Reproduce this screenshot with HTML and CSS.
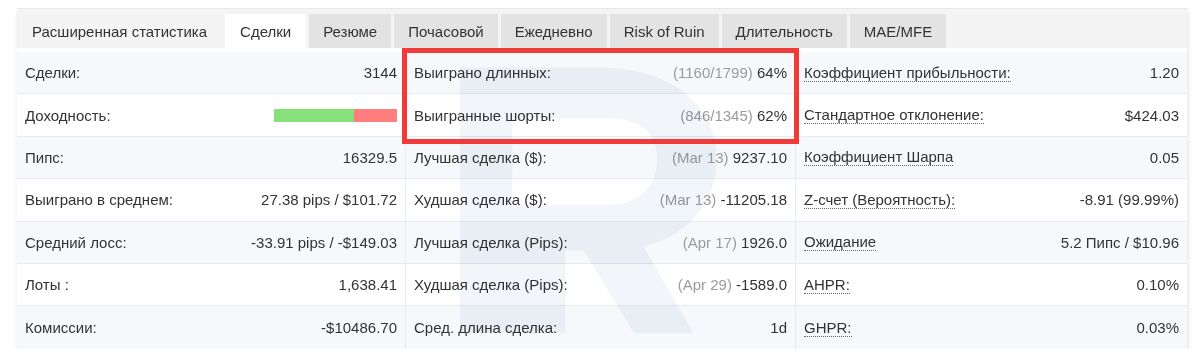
FILE: index.html
```html
<!DOCTYPE html>
<html lang="ru">
<head>
    <meta charset="UTF-8">
    <title>Статистика</title>
    <link rel="stylesheet" href="styles.css">
</head>
<body>
	<div class="panel">
		<ul class="tabs">
			<li class="plain">Расширенная статистика</li>
			<li class="on">Сделки</li>
			<li>Резюме</li>
			<li>Почасовой</li>
			<li>Ежедневно</li>
			<li>Risk of Ruin</li>
			<li>Длительность</li>
			<li>MAE/MFE</li>
		</ul>
		<div class="stats">
			<svg class="mark" viewBox="0 0 300 300" aria-hidden="true">
				<path d="M0 0 H150 C230 0 280 40 280 100 C280 150 245 185 200 195 L255 290 H190 L135 200 H115 V290 H57 V150 H160 C195 150 215 130 215 100 C215 70 195 55 160 55 H57 V290 H0 Z"/>
			</svg>
			<div class="col">
				<div class="row"><span>Сделки:</span><span>3144</span></div>
				<div class="row"><span>Доходность:</span><span class="bar"><i class="win" style="width:65%"></i><i class="loss"></i></span></div>
				<div class="row"><span>Пипс:</span><span>16329.5</span></div>
				<div class="row"><span>Выиграно в среднем:</span><span>27.38 pips / $101.72</span></div>
				<div class="row"><span>Средний лосс:</span><span>-33.91 pips / -$149.03</span></div>
				<div class="row"><span>Лоты :</span><span>1,638.41</span></div>
				<div class="row"><span>Комиссии:</span><span>-$10486.70</span></div>
			</div>
			<div class="col">
				<div class="row"><span>Выиграно длинных:</span><span><em>(1160/1799)</em> 64%</span></div>
				<div class="row"><span>Выигранные шорты:</span><span><em>(846/1345)</em> 62%</span></div>
				<div class="row"><span>Лучшая сделка ($):</span><span><em>(Mar 13)</em> 9237.10</span></div>
				<div class="row"><span>Худшая сделка ($):</span><span><em>(Mar 13)</em> -11205.18</span></div>
				<div class="row"><span>Лучшая сделка (Pips):</span><span><em>(Apr 17)</em> 1926.0</span></div>
				<div class="row"><span>Худшая сделка (Pips):</span><span><em>(Apr 29)</em> -1589.0</span></div>
				<div class="row"><span>Сред. длина сделка:</span><span>1d</span></div>
			</div>
			<div class="col">
				<div class="row"><span class="tip">Коэффициент прибыльности:</span><span>1.20</span></div>
				<div class="row"><span class="tip">Стандартное отклонение:</span><span>$424.03</span></div>
				<div class="row"><span class="tip">Коэффициент Шарпа</span><span>0.05</span></div>
				<div class="row"><span class="tip">Z-счет (Вероятность):</span><span>-8.91 (99.99%)</span></div>
				<div class="row"><span class="tip">Ожидание</span><span>5.2 Пипс / $10.96</span></div>
				<div class="row"><span class="tip">AHPR:</span><span>0.10%</span></div>
				<div class="row"><span class="tip">GHPR:</span><span>0.03%</span></div>
			</div>
			<div class="frame"></div>
		</div>
	</div>
</body>
</html>
```
FILE: styles.css
```css
*{
	padding: 0px;
	margin: 0px;
	list-style: none;
	box-sizing: border-box;
}
body{
	background-color: #ffffff;
	font-family: "Liberation Sans", Arial, sans-serif;
	font-size: 15px;
	color: #333333;
}
.panel{
	width: 1170px;
	margin: 8px 0 0 17px;
	border-top: 1px solid #e8e8e8;
	box-shadow: 1px 3px 5px rgba(0,0,0,0.12);
}
.tabs{
	display: flex;
	gap: 3px;
	height: 39px;
	padding-top: 5px;
	background-color: #f4f4f4;
}
.tabs li{
	display: flex;
	align-items: center;
	padding: 0 14px;
	background-color: #e3e3e3;
}
.tabs .plain{
	padding: 0 15px;
	background-color: transparent;
}
.tabs .on{
	padding: 0 15px;
	background-color: #ffffff;
}
.stats{
	position: relative;
	display: grid;
	grid-template-columns: 388px 390px 1fr;
	padding-top: 4px;
}
.col{
	display: flex;
	flex-direction: column;
}
.col + .col{
	border-left: 1px solid #e6ebf1;
}
.row{
	display: flex;
	justify-content: space-between;
	align-items: center;
	height: 42.4px;
	padding: 0 8px;
	border-bottom: 1px solid #e6ebf1;
}
.row:nth-child(odd){
	background-color: #f6f8fb;
}
.row:last-child{
	border-bottom: none;
}
.row em{
	font-style: normal;
	color: #9b9b9b;
}
.tip{
	border-bottom: 1px dotted #666666;
	line-height: 17px;
}
.bar{
	display: flex;
	width: 123px;
	height: 13px;
}
.bar i{
	display: block;
	height: 100%;
}
.bar .win{
	background-color: #88e07c;
}
.bar .loss{
	flex: 1;
	background-color: #ff7f7f;
}
.mark{
	/*водяной знак поверх таблицы*/
	position: absolute;
	left: 443px;
	top: 12px;
	width: 275px;
	height: 290px;
	fill: #f2f5f9;
	mix-blend-mode: multiply;
	z-index: 1;
	pointer-events: none;
}
.frame{
	/*выделение двух строк*/
	position: absolute;
	left: 385px;
	top: 0px;
	width: 397px;
	height: 96px;
	border: 5px solid #f03b3b;
	z-index: 2;
}
```
